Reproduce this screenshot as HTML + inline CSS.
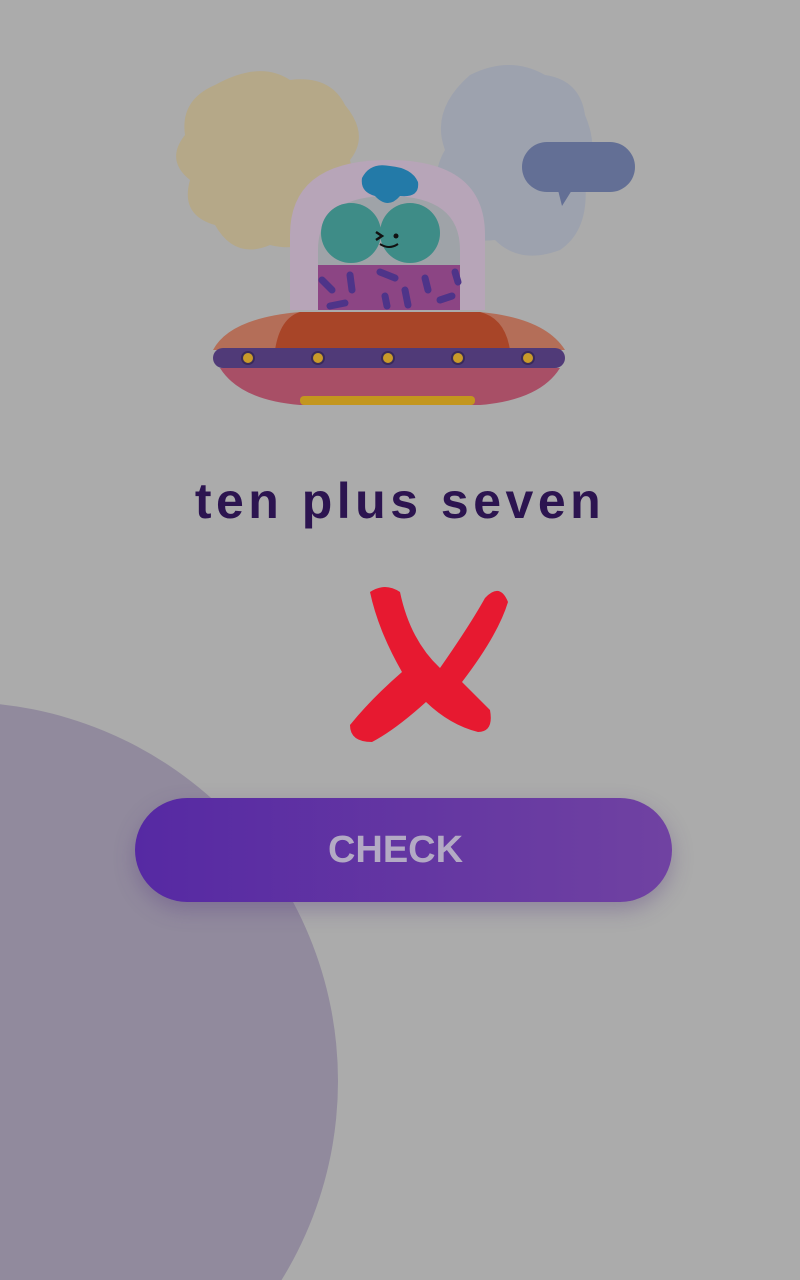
<!DOCTYPE html>
<html><head><style>
html,body{margin:0;padding:0;width:800px;height:1280px;overflow:hidden;background:#ababab;font-family:"Liberation Sans",sans-serif}
#w{position:relative;width:800px;height:1280px;overflow:hidden}
.t{position:absolute;left:0;width:800px;top:472px;text-align:center;font-size:50px;font-weight:bold;color:#2c1450;letter-spacing:4.5px}
.b{position:absolute;left:135px;top:798px;width:537px;height:104px;border-radius:52px;background:linear-gradient(90deg,#5629a3,#7042a2);box-shadow:0 8px 20px rgba(90,60,130,.35);text-align:center;line-height:104px;color:#b3aac4;font-size:38px;font-weight:bold;text-indent:-16px}
</style></head><body><div id="w">
<svg width="800" height="1280" style="position:absolute;left:0;top:0"><circle cx="-41" cy="1081" r="379" fill="#918a9d"/></svg>
<svg width="800" height="420" style="position:absolute;left:0;top:0">
<path d="M215 85 Q260 60 290 80 Q330 75 345 105 Q370 135 350 160 Q360 200 330 220 Q310 255 270 245 Q235 260 215 225 Q180 215 190 180 Q165 160 185 135 Q180 100 215 85Z" fill="#b5a888"/>
<path d="M470 75 Q510 55 545 75 Q580 80 585 115 Q600 150 585 180 Q590 230 560 250 Q520 265 495 240 Q450 245 440 210 Q430 175 445 150 Q430 110 470 75Z" fill="#9da2ae"/>
<rect x="522" y="142" width="113" height="50" rx="25" fill="#636f95"/>
<path d="M558 190 L562 206 L572 190Z" fill="#636f95"/>
<path d="M290 310 L290 235 Q290 160 388 160 Q485 160 485 235 L485 310Z" fill="#b7a5b8"/>
<path d="M318 310 L318 250 Q318 196 389 196 Q460 196 460 250 L460 310Z" fill="#9fa3a8"/>
<rect x="318" y="265" width="142" height="45" fill="#8c4584"/>
<g stroke="#4e3489" stroke-width="7" stroke-linecap="round">
<line x1="322" y1="280" x2="332" y2="290"/><line x1="350" y1="275" x2="352" y2="290"/><line x1="380" y1="272" x2="395" y2="278"/><line x1="385" y1="296" x2="387" y2="306"/><line x1="405" y1="290" x2="408" y2="305"/><line x1="425" y1="278" x2="428" y2="290"/><line x1="440" y1="300" x2="452" y2="296"/><line x1="330" y1="306" x2="345" y2="303"/><line x1="455" y1="272" x2="458" y2="282"/></g>
<path d="M362 178 Q370 162 390 166 Q412 168 418 182 Q420 198 400 196 Q388 210 375 196 Q360 192 362 178Z" fill="#237aa8"/>
<circle cx="351" cy="233" r="30" fill="#3e8c87"/><circle cx="410" cy="233" r="30" fill="#3e8c87"/>
<path d="M376 232 L382 236 L376 240" stroke="#111" stroke-width="2.5" fill="none"/><circle cx="396" cy="236" r="2.5" fill="#111"/>
<path d="M380 244 Q389 250 398 244" stroke="#111" stroke-width="2" fill="none"/>
<path d="M213 350 Q230 318 300 312 L480 312 Q545 318 565 350Z" fill="#b46e58"/>
<path d="M275 350 Q280 318 300 312 L480 312 Q505 318 510 350Z" fill="#a84528"/>
<rect x="213" y="348" width="352" height="20" rx="10" fill="#503a78"/>
<path d="M220 368 L560 368 Q540 400 480 405 L300 405 Q240 400 220 368Z" fill="#a84f66"/>
<rect x="300" y="396" width="175" height="9" rx="4" fill="#c3961e"/>
<g fill="#c99a2a" stroke="#3a2a5a" stroke-width="2"><circle cx="248" cy="358" r="6"/><circle cx="318" cy="358" r="6"/><circle cx="388" cy="358" r="6"/><circle cx="458" cy="358" r="6"/><circle cx="528" cy="358" r="6"/></g>
</svg>
<div class="t">ten plus seven</div>
<svg width="800" height="170" style="position:absolute;left:0;top:580px">
<path d="M370 12 Q385 2 400 12 Q410 60 440 88 Q470 45 485 18 Q500 2 508 22 Q498 55 462 102 Q478 118 490 130 Q494 152 478 152 Q450 145 426 122 Q395 150 372 162 Q350 162 350 145 Q372 118 402 92 Q378 50 370 12Z" fill="#e71930"/>
</svg>
<div class="b">CHECK</div>
</div></body></html>
